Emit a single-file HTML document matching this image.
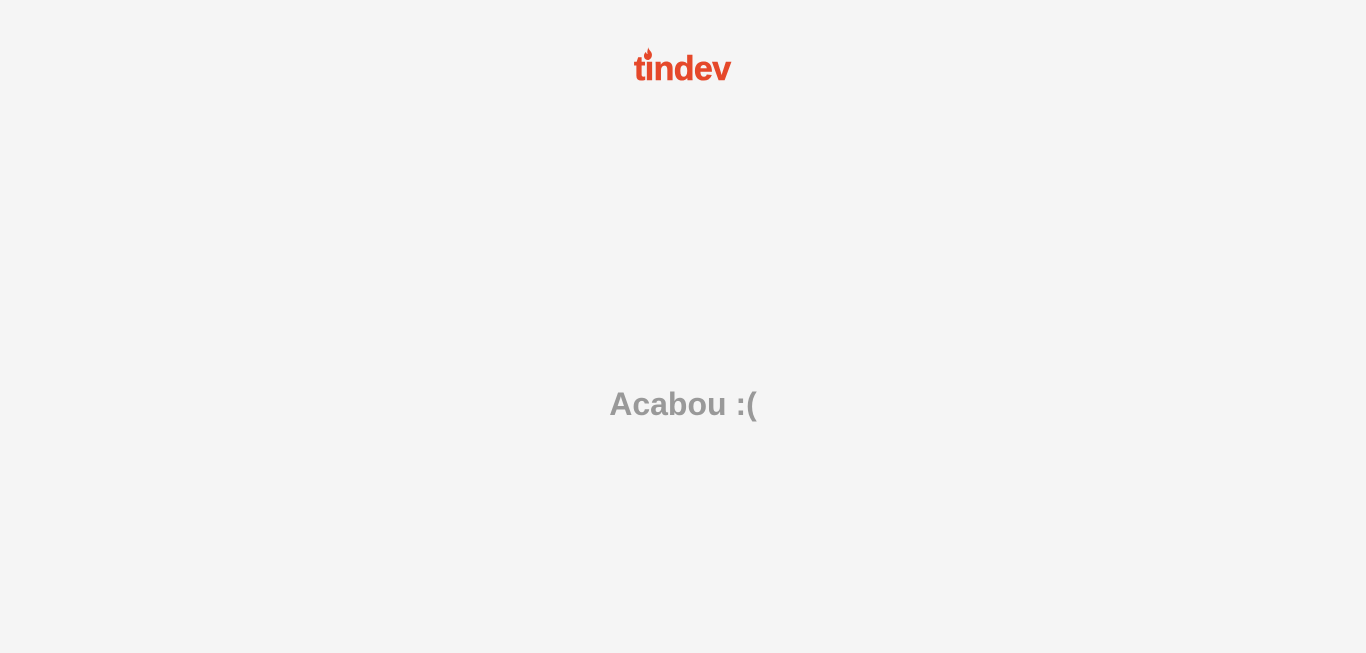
<!DOCTYPE html>
<html><head><meta charset="utf-8">
<style>
html,body{margin:0;padding:0;width:1366px;height:653px;background:#f5f5f5;overflow:hidden;font-family:"Liberation Sans",Arial,sans-serif}
.logo{position:absolute;left:634px;top:49px;font-weight:bold;font-size:34px;color:#e5482a;letter-spacing:-0.6px;line-height:40px;-webkit-text-stroke:0.6px #e5482a}
.flame{position:absolute;left:643px;top:47px}
.msg{position:absolute;left:0;width:1366px;text-align:center;top:384px;font-weight:bold;font-size:32px;color:#999;line-height:40px}
</style></head><body>
<div class="logo">tındev</div>
<svg class="flame" width="10" height="13" viewBox="0 0 9 12"><path d="M4.5 0C5 3 9 4.5 8 8.5 7.3 11 5.5 12 4.5 12 2 12 .5 10 .8 7.5 1 6 2.2 5 2.5 4.5 3 6 3.5 6.5 4.2 6.5 3.2 4 4.8 2 4.5 0Z" fill="#e5482a"/></svg>
<div class="msg">Acabou :(</div>
</body></html>
